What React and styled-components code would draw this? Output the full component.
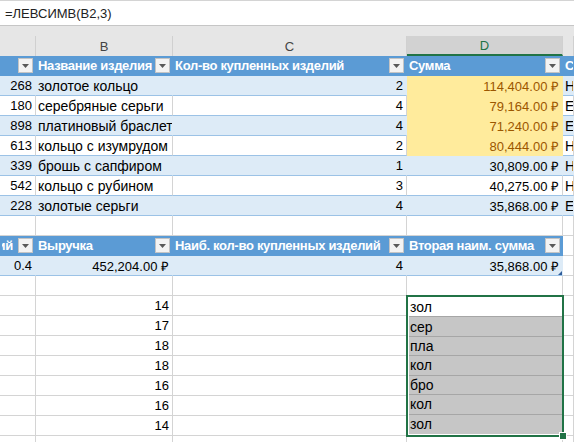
import React from "react";
import styled, { createGlobalStyle, css } from "styled-components";

const GlobalStyle = createGlobalStyle`
  html, body {
    margin: 0;
    padding: 0;
    background: #ffffff;
  }
  body {
    font-family: "Liberation Sans", Arial, sans-serif;
    font-size: 13px;
    color: #000;
    overflow: hidden;
  }
`;

const COLS = "36px 137px 234px 156px 1fr";

const Window = styled.div`
  width: 574px;
  height: 442px;
  overflow: hidden;
  background: #fff;
  display: flex;
  flex-direction: column;
`;

const FormulaBar = styled.div`
  height: 26px;
  flex-shrink: 0;
  box-sizing: border-box;
  border-top: 1px solid #d4d4d4;
  border-bottom: 1px solid #c6c6c6;
  display: flex;
  align-items: center;
  padding: 0 5px;
  font-size: 13px;
  color: #222;
`;

const Spacer = styled.div`
  height: 10px;
  flex-shrink: 0;
  background: #e6e6e6;
`;

const HeaderStrip = styled.div`
  display: grid;
  grid-template-columns: ${COLS};
  height: 20px;
  flex-shrink: 0;
  background: #e6e6e6;
`;

const ColHead = styled.div`
  box-sizing: border-box;
  border-right: 1px solid #d0d0d0;
  display: flex;
  align-items: center;
  justify-content: center;
  color: #444;
  font-size: 13px;
  ${(p) =>
    p.$active &&
    css`
      background: #d2d2d2;
      color: #217346;
      border-bottom: 2px solid #217346;
    `}
`;

const Sheet = styled.div`
  display: grid;
  grid-template-columns: ${COLS};
  grid-auto-rows: 20px;
`;

const tones = {
  blank: css`
    background: #fff;
    border-right-color: #d4d4d4;
    border-bottom-color: #d4d4d4;
  `,
  head: css`
    background: #5b9bd5;
    color: #fff;
    font-weight: bold;
    letter-spacing: -0.3px;
    border-right-color: #5b9bd5;
    border-bottom-color: #5b9bd5;
  `,
  band: css`
    background: #ddebf7;
    border-right-color: #ddebf7;
    border-bottom-color: #9bc2e6;
  `,
  plain: css`
    background: #fff;
    border-right-color: #d4d4d4;
    border-bottom-color: #9bc2e6;
  `,
  neutral: css`
    background: #ffeb9c;
    color: #9c5700;
    border-right-color: #ffeb9c;
    border-bottom-color: #ffeb9c;
  `,
};

const Cell = styled.div`
  position: relative;
  box-sizing: border-box;
  border-right: 1px solid transparent;
  border-bottom: 1px solid transparent;
  display: flex;
  align-items: center;
  justify-content: ${(p) => (p.$right ? "flex-end" : "flex-start")};
  padding: 0 3px 0 2px;
  font-size: ${(p) => (p.$word ? "14px" : "13px")};
  white-space: nowrap;
  overflow: hidden;
  ${(p) => tones[p.$tone || "blank"]}
`;

const Label = styled.div`
  flex: 1;
  min-width: 0;
  overflow: hidden;
  display: flex;
  justify-content: ${(p) => (p.$end ? "flex-end" : "flex-start")};
  margin-right: ${(p) => (p.$end ? "5px" : "1px")};

  span {
    flex-shrink: 0;
  }
`;

const FilterButton = styled.span`
  width: 15px;
  height: 15px;
  flex-shrink: 0;
  box-sizing: border-box;
  border: 1px solid #c4c4c4;
  background: #f3f3f3;
  display: flex;
  align-items: center;
  justify-content: center;
  margin-right: -1px;
  padding-top: 1px;
`;

const ResizeMark = styled.svg`
  position: absolute;
  right: 0;
  bottom: 0;
`;

const SelectionCell = styled.div`
  grid-row: span 7;
  position: relative;
  z-index: 1;
`;

const Selection = styled.div`
  box-sizing: border-box;
  margin: -1px;
  height: calc(100% + 2px);
  border: 2px solid #217346;
  padding: 1px 0 1px 1px;
  background: #fff;
  display: flex;
  flex-direction: column;
  position: relative;
  font-size: 14px;
`;

const SelRow = styled.div`
  flex: 1;
  display: flex;
  align-items: center;
  padding-left: 1px;
  background: ${(p) => (p.$active ? "#ffffff" : "#c6c6c6")};
  border-bottom: 1px solid ${(p) => (p.$last ? "transparent" : "#a6a6a6")};
`;

const FillHandle = styled.span`
  position: absolute;
  right: -5px;
  bottom: -5px;
  width: 8px;
  height: 8px;
  box-sizing: border-box;
  background: #217346;
  border: 1px solid #fff;
`;

const Arrow = () => (
  <svg width="7" height="4" viewBox="0 0 7 4">
    <polygon points="0,0 7,0 3.5,4" fill="#595959" />
  </svg>
);

const HeadCell = ({ text, end, button = true }) => (
  <Cell $tone="head">
    <Label $end={end}>
      <span>{text}</span>
    </Label>
    {button && <FilterButton><Arrow /></FilterButton>}
  </Cell>
);

const products = [
  [268, "золотое кольцо", 2, "114,404.00 ₽", "Нет", true],
  [180, "серебряные серьги", 4, "79,164.00 ₽", "Есть", true],
  [898, "платиновый браслет", 4, "71,240.00 ₽", "Есть", true],
  [613, "кольцо с изумрудом", 2, "80,444.00 ₽", "Нет", true],
  [339, "брошь с сапфиром", 1, "30,809.00 ₽", "Нет", false],
  [542, "кольцо с рубином", 3, "40,275.00 ₽", "Нет", false],
  [228, "золотые серьги", 4, "35,868.00 ₽", "Есть", false],
];

const counts = [14, 17, 18, 18, 16, 16, 14];
const prefixes = ["зол", "сер", "пла", "кол", "бро", "кол", "зол"];

const BlankRow = () => (
  <>
    <Cell />
    <Cell />
    <Cell />
    <Cell />
    <Cell />
  </>
);

export default function App() {
  return (
    <Window>
      <GlobalStyle />
      <FormulaBar>=ЛЕВСИМВ(B2,3)</FormulaBar>
      <Spacer />
      <HeaderStrip>
        <ColHead />
        <ColHead>B</ColHead>
        <ColHead>C</ColHead>
        <ColHead $active>D</ColHead>
        <ColHead />
      </HeaderStrip>
      <Sheet>
        <HeadCell text="" />
        <HeadCell text="Название изделия" />
        <HeadCell text="Кол-во купленных изделий" />
        <HeadCell text="Сумма" />
        <Cell $tone="head">Скидка</Cell>

        {products.map(([id, name, qty, sum, disc, hot], i) => {
          const tone = i % 2 === 0 ? "band" : "plain";
          return (
            <React.Fragment key={id}>
              <Cell $tone={tone} $right>{id}</Cell>
              <Cell $tone={tone} $word>{name}</Cell>
              <Cell $tone={tone} $right>{qty}</Cell>
              <Cell $tone={hot ? "neutral" : tone} $right>{sum}</Cell>
              <Cell $tone={tone} $word>{disc}</Cell>
            </React.Fragment>
          );
        })}

        <BlankRow />

        <HeadCell text="купленных изделий" end />
        <HeadCell text="Выручка" />
        <HeadCell text="Наиб. кол-во купленных изделий" />
        <HeadCell text="Вторая наим. сумма" />
        <Cell />

        <Cell $tone="band" $right>0.4</Cell>
        <Cell $tone="band" $right>452,204.00 ₽</Cell>
        <Cell $tone="band" $right>4</Cell>
        <Cell $tone="band" $right>
          35,868.00 ₽
          <ResizeMark width="4" height="4" viewBox="0 0 4 4">
            <polygon points="4,0 4,4 0,4" fill="#2e5c9a" />
          </ResizeMark>
        </Cell>
        <Cell />

        <BlankRow />

        {counts.map((n, i) => (
          <React.Fragment key={i}>
            <Cell />
            <Cell $right>{n}</Cell>
            <Cell />
            {i === 0 && (
              <SelectionCell>
                <Selection>
                  {prefixes.map((p, j) => (
                    <SelRow key={j} $active={j === 0} $last={j === prefixes.length - 1}>
                      {p}
                    </SelRow>
                  ))}
                  <FillHandle />
                </Selection>
              </SelectionCell>
            )}
            <Cell />
          </React.Fragment>
        ))}

        <BlankRow />
      </Sheet>
    </Window>
  );
}
